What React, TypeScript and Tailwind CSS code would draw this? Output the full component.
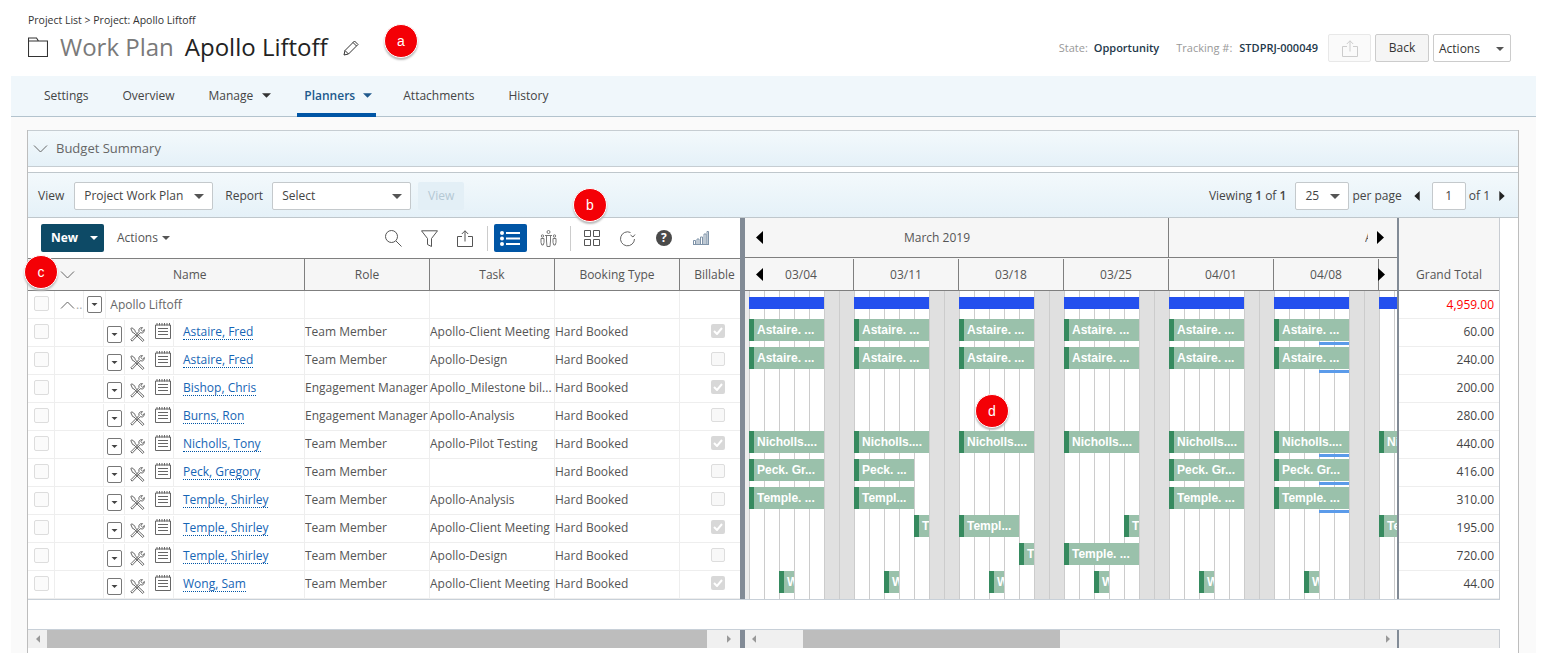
import React from 'react';

const Caret = ({ className = 'w-[10px] h-[5px] fill-[#555]' }: { className?: string }) => (
  <svg viewBox="0 0 10 5" className={className}><polygon points="0,0 10,0 5,5" /></svg>
);

const ArrowL = ({ className = 'w-[7px] h-[13px] fill-black' }: { className?: string }) => (
  <svg viewBox="0 0 7 13" className={className}><polygon points="7,0 7,13 0,6.5" /></svg>
);

const ArrowR = ({ className = 'w-[7px] h-[13px] fill-black' }: { className?: string }) => (
  <svg viewBox="0 0 7 13" className={className}><polygon points="0,0 0,13 7,6.5" /></svg>
);

const Chevron = ({ up = false }: { up?: boolean }) => (
  <svg viewBox="0 0 15 8" className="w-[15px] h-[8px] fill-none stroke-[#666]">
    <path d={up ? 'M1 7.5 7.5 1 14 7.5' : 'M1 .5 7.5 7 14 .5'} />
  </svg>
);

const Dot = ({ label, className }: { label: string; className: string }) => (
  <div className={"absolute flex h-[34px] w-[34px] items-center justify-center rounded-full border border-white bg-[#f40006] font-['Liberation_Sans',sans-serif] text-[14px] text-white shadow-[0_2px_2px_#bbb] " + className}>
    {label}
  </div>
);

const Select = ({ text, className }: { text: string; className: string }) => (
  <div className={'flex h-[28px] items-center justify-between rounded-[2px] border border-[#c4c9cc] bg-white pl-[9px] pr-[8px] text-[12px] text-[#444] ' + className}>
    <span>{text}</span>
    <Caret />
  </div>
);

const ToolIcon = () => (
  <svg viewBox="0 0 15 15" className="h-[15px] w-[15px] fill-none stroke-[#666]" strokeWidth="1">
    <path d="M.8 1.500 2 .8l3 2.500.2 1.500 8.800 8.400-1.300 1.300L4 6 2.600 5.500z" />
    <path d="M.8 12.800 9 4.600a3 3 0 0 1 1.500-3.800 3 3 0 0 1 2-.2L10.800 2.500l1.700 1.700 1.900-1.700a3 3 0 0 1-.4 2.200 3 3 0 0 1-3.800 1L2.200 14.200z" />
  </svg>
);

const NoteIcon = () => (
  <svg viewBox="0 0 16 16" className="h-[16px] w-[16px] fill-none stroke-[#666]">
    <path d="M.5 2h15v13.500H.5z" />
    <path d="M3 5.500h10M3 8.500h10M3 11.500h10" strokeWidth="1.200" />
    <path d="M2 2.500V0M4.500 2.500V0M7 2.500V0M9.500 2.500V0M12 2.500V0M14.500 2.500V0" />
  </svg>
);

const ShareIcon = ({ className }: { className: string }) => (
  <svg viewBox="0 0 16 17" className={className}>
    <path d="M5 6.500H.5v10h15v-10H11M8 11.500V.8M4.800 4 8 .8 11.200 4" />
  </svg>
);

const RowMenu = () => (
  <div className="flex h-[17px] w-[15px] items-center justify-center rounded-[2px] border border-[#777] bg-white">
    <Caret className="h-[3px] w-[7px] fill-[#444]" />
  </div>
);

const Check = ({ checked }: { checked: boolean }) =>
  checked ? (
    <div className="flex h-[14px] w-[14px] items-center justify-center rounded-[2px] bg-[#d8d8d8]">
      <svg viewBox="0 0 10 8" className="h-[8px] w-[10px] fill-none stroke-white" strokeWidth="2"><path d="M1 4l3 3 5-6" /></svg>
    </div>
  ) : (
    <div className="h-[14px] w-[14px] rounded-[2px] border border-[#ddd] bg-[#f8f8f8]" />
  );

const rows = [
  { name: 'Astaire, Fred', role: 'Team Member', task: 'Apollo-Client Meeting', billable: true, total: '60.00' },
  { name: 'Astaire, Fred', role: 'Team Member', task: 'Apollo-Design', billable: false, total: '240.00' },
  { name: 'Bishop, Chris', role: 'Engagement Manager', task: 'Apollo_Milestone bil...', billable: true, total: '200.00' },
  { name: 'Burns, Ron', role: 'Engagement Manager', task: 'Apollo-Analysis', billable: false, total: '280.00' },
  { name: 'Nicholls, Tony', role: 'Team Member', task: 'Apollo-Pilot Testing', billable: true, total: '440.00' },
  { name: 'Peck, Gregory', role: 'Team Member', task: '', billable: false, total: '416.00' },
  { name: 'Temple, Shirley', role: 'Team Member', task: 'Apollo-Analysis', billable: false, total: '310.00' },
  { name: 'Temple, Shirley', role: 'Team Member', task: 'Apollo-Client Meeting', billable: true, total: '195.00' },
  { name: 'Temple, Shirley', role: 'Team Member', task: 'Apollo-Design', billable: false, total: '720.00' },
  { name: 'Wong, Sam', role: 'Team Member', task: 'Apollo-Client Meeting', billable: true, total: '44.00' },
];

// x is measured from the first monday in the chart, w in pixels
type Bar = { x: number; w: number; t: string };

const weekly = (t: string): Bar[] => [0, 105, 210, 315, 420, 525].map((x) => ({ x, w: 75, t }));

const bars: Bar[][] = [
  weekly('Astaire. ...'),
  weekly('Astaire. ...'),
  [],
  [],
  [...weekly('Nicholls....'), { x: 630, w: 18, t: 'Ni' }],
  [
    { x: 0, w: 75, t: 'Peck. Gr...' },
    { x: 105, w: 60, t: 'Peck. ...' },
    { x: 420, w: 75, t: 'Peck. Gr...' },
    { x: 525, w: 75, t: 'Peck. Gr...' },
  ],
  [
    { x: 0, w: 75, t: 'Temple. ...' },
    { x: 105, w: 60, t: 'Templ...' },
    { x: 420, w: 75, t: 'Temple. ...' },
    { x: 525, w: 75, t: 'Temple. ...' },
  ],
  [
    { x: 165, w: 15, t: 'T' },
    { x: 210, w: 60, t: 'Templ...' },
    { x: 375, w: 15, t: 'T' },
    { x: 630, w: 18, t: 'Te' },
  ],
  [
    { x: 270, w: 15, t: 'T' },
    { x: 315, w: 75, t: 'Temple. ...' },
  ],
  [30, 135, 240, 345, 450, 555].map((x) => ({ x, w: 15, t: 'W' })),
];

const underlined = [0, 1, 4, 5, 6];
const weeks = ['03/04', '03/11', '03/18', '03/25', '04/01', '04/08'];
const days = Array.from({ length: 45 }, (_, i) => i);

const td = 'flex shrink-0 items-center border-r border-[#eee] pb-[2px] whitespace-nowrap overflow-hidden';
const th = 'flex shrink-0 items-center justify-center border-r border-[#7f7f7f] pt-[1px] font-medium';

export default function App() {
  return (
    <div className="relative h-[666px] w-[1548px] overflow-hidden bg-white font-['Open_Sans',sans-serif] text-[12px] text-[#555]">
      {/* page header */}
      <div className="flex h-[76px] items-start justify-between pl-[28px] pr-[37px]">
        <div className="pt-[13px]">
          <div className="text-[10.5px] leading-[14px] text-[#333]">Project List &gt; Project: Apollo Liftoff</div>
          <div className="mt-[3px] flex h-[33px] items-center">
            <svg viewBox="0 0 20 20" className="h-[20px] w-[20px] fill-none stroke-[#333]" strokeWidth="1.1">
              <path d="M.5 19.500V1h8l2 3h9v15.500zM.5 4h10" />
            </svg>
            <span className="ml-[12px] text-[24px] text-[#7a7a7a]">Work Plan</span>
            <span className="ml-[11px] text-[24px] text-[#222]">Apollo Liftoff</span>
            <svg viewBox="0 0 16 16" className="ml-[15px] mt-[2px] h-[16px] w-[16px] fill-none stroke-[#333]">
              <path d="M1 15l1-4.500L11.500 1l3.500 3.500L5.500 14zM2 10.500 5.500 14M10 2.500l3.500 3.500" />
            </svg>
          </div>
        </div>
        <div className="flex items-center pt-[34px] text-[11px]">
          <span className="text-[#999]">State:</span>
          <span className="ml-[6px] font-semibold text-[#23384a]">Opportunity</span>
          <span className="ml-[17px] text-[#999]">Tracking #:</span>
          <span className="ml-[7px] font-semibold text-[#23384a]">STDPRJ-000049</span>
          <div className="ml-[10px] flex h-[28px] w-[43px] items-center justify-center rounded-[2px] border border-[#e8e8e8] bg-[#fafafa]">
            <ShareIcon className="h-[17px] w-[16px] fill-none stroke-[#ccc]" />
          </div>
          <div className="ml-[4px] flex h-[28px] w-[54px] items-center justify-center rounded-[2px] border border-[#ccc] bg-[#f5f5f5] text-[12px] text-[#333]">Back</div>
          <div className="ml-[4px] flex h-[28px] w-[78px] items-center justify-between rounded-[2px] border border-[#ccc] bg-white pl-[5px] pr-[6px] pt-[1px] text-[12px] text-[#333]">
            <span>Actions</span>
            <Caret className="h-[4px] w-[8px] fill-[#555]" />
          </div>
        </div>
      </div>

      {/* tabs */}
      <div className="ml-[11px] flex h-[41px] w-[1525px] items-stretch border-b border-[#b3c3cd] bg-[#f0f7fb] pb-[1px] pl-[26px]">
        <div className="flex items-center px-[7px] text-[#444]">Settings</div>
        <div className="ml-[20px] flex items-center px-[7px] text-[#444]">Overview</div>
        <div className="ml-[20px] flex items-center gap-[9px] px-[7px] text-[#444]">Manage <Caret className="h-[5px] w-[9px] fill-[#333]" /></div>
        <div className="ml-[19px] flex h-[41px] w-[79px] items-center gap-[8px] border-b-[4px] border-[#0055a5] pl-[7px] pt-[2px] font-semibold text-[#20598c]">Planners <Caret className="h-[5px] w-[9px] fill-[#20598c]" /></div>
        <div className="ml-[20px] flex items-center px-[7px] text-[#444]">Attachments</div>
        <div className="ml-[20px] flex items-center px-[7px] text-[#444]">History</div>
      </div>

      {/* content area */}
      <div className="ml-[11px] h-[536px] w-[1525px] bg-[#fafafa] pl-[16px] pt-[13px]">
        <div className="h-[523px] w-[1492px] border-x border-[#bdbdbd] bg-white">
          <div className="flex h-[37px] items-center gap-[8px] border-y border-[#c6cdd2] bg-linear-to-b from-[#f3f9fc] to-[#e5f1f8] pl-[5px] text-[13px] text-[#666]">
            <Chevron />
            Budget Summary
          </div>

          {/* view bar */}
          <div className="mt-[5px] flex h-[46px] items-center border-y border-[#bfc7cc] bg-linear-to-b from-[#f3f9fc] to-[#e5f1f8] pl-[10px] pt-[2px] text-[#444]">
            <span>View</span>
            <Select text="Project Work Plan" className="ml-[10px] w-[139px]" />
            <span className="ml-[12px]">Report</span>
            <Select text="Select" className="ml-[9px] w-[139px]" />
            <div className="ml-[7px] flex h-[28px] w-[46px] items-center justify-center rounded-[2px] bg-[#e3eff6] text-[#b4c8d4]">View</div>
            <span className="ml-auto">Viewing <b className="font-semibold">1</b> of <b className="font-semibold">1</b></span>
            <Select text="25" className="ml-[9px] w-[54px]" />
            <span className="ml-[3px]">per page</span>
            <ArrowL className="ml-[12px] h-[10px] w-[6px] fill-[#222]" />
            <div className="ml-[12px] flex h-[28px] w-[34px] items-center justify-center rounded-[2px] border border-[#c4c9cc] bg-white">1</div>
            <span className="ml-[3px]">of 1</span>
            <ArrowR className="ml-[9px] mr-[13px] h-[10px] w-[6px] fill-[#222]" />
          </div>

          <div className="flex h-[382px] w-[1472px] border-b border-[#c8d0d8]">
            {/* left pane */}
            <div className="w-[712px] shrink-0">
              <div className="flex h-[40px] items-center pl-[13px] text-[#555]">
                <div className="flex h-[28px] w-[63px] items-center rounded-[2px] bg-[#0d4a66] pl-[10px] font-bold text-white">
                  New
                  <Caret className="ml-[12px] h-[4px] w-[8px] fill-white" />
                </div>
                <span className="ml-[13px]">Actions</span>
                <Caret className="ml-[4px] h-[4px] w-[8px] fill-[#555]" />
                <svg viewBox="0 0 17 17" className="ml-[215px] h-[17px] w-[17px] fill-none stroke-[#555]">
                  <circle cx="6.5" cy="6.5" r="6" />
                  <path d="M11 11l5.500 5.500" />
                </svg>
                <svg viewBox="0 0 17 17" className="ml-[19px] h-[17px] w-[17px] fill-none stroke-[#555]">
                  <path d="M.5 .8h16L10.500 8.500v8l-4-2V8.500z" />
                </svg>
                <ShareIcon className="ml-[19px] h-[17px] w-[16px] fill-none stroke-[#555]" />
                <div className="ml-[14px] h-[25px] w-px bg-[#ccc]" />
                <div className="ml-[6px] flex h-[28px] w-[33px] items-center justify-center rounded-[2px] bg-[#0055a5]">
                  <svg viewBox="0 0 20 15" className="h-[15px] w-[20px] fill-white">
                    <circle cx="2" cy="2" r="2" /><circle cx="2" cy="7.5" r="2" /><circle cx="2" cy="13" r="2" />
                    <rect x="6" y="1" width="14" height="2" /><rect x="6" y="6.5" width="14" height="2" /><rect x="6" y="12" width="14" height="2" />
                  </svg>
                </div>
                <svg viewBox="0 0 17 17" className="ml-[13px] h-[17px] w-[17px] fill-none stroke-[#777]">
                  <circle cx="8.5" cy="2" r="1.5" /><path d="M5 5.500h7M6.500 5.500V11l.5 5.500h3l.5-5.500V5.500" />
                  <circle cx="2.5" cy="6" r="1.2" /><path d="M1 8.500h3v4l-.8 2.500H1.800L1 12.500z" />
                  <circle cx="14.5" cy="6" r="1.2" /><path d="M13 8.500h3v4l-.8 2.500h-1.400l-.8-2.500z" />
                </svg>
                <div className="ml-[13px] h-[25px] w-px bg-[#ccc]" />
                <svg viewBox="0 0 16 16" className="ml-[13px] h-[16px] w-[16px] fill-none stroke-[#555]">
                  <path d="M.5 .5h6v6h-6zM9.500 .5h6v6h-6zM.5 9.500h6v6h-6zM9.500 9.500h6v6h-6z" />
                </svg>
                <svg viewBox="0 0 17 17" className="ml-[19px] h-[17px] w-[17px] fill-none stroke-[#666]">
                  <path d="M11.500 2.500A7 7 0 1 0 15.500 9" />
                  <path d="M16 4.500l-2 2.500-2.500-2" />
                </svg>
                <div className="ml-[20px] flex h-[16px] w-[16px] items-center justify-center rounded-full bg-[#4a4a4a] text-[12px] font-bold text-white">?</div>
                <svg viewBox="0 0 16 14" className="ml-[21px] h-[14px] w-[16px] fill-none stroke-[#7f93a8]">
                  <path d="M.5 13.500v-4h2v4zM4 13.500V8h2v5.500zM7.500 13.500V6h2v7.500zM11 13.500V3h2v10.500zM14 13.500V.5h1.500v13zM0 13.500h16" />
                </svg>
              </div>
              <div className="flex h-[33px] border-y border-[#7f7f7f] bg-[#f6f6f6] text-[#555]">
                <div className="flex w-[277px] shrink-0 items-center border-r border-[#7f7f7f] pl-[32px]">
                  <Chevron />
                  <span className="ml-[98px] font-medium">Name</span>
                </div>
                <div className={th + ' w-[125px]'}>Role</div>
                <div className={th + ' w-[125px]'}>Task</div>
                <div className={th + ' w-[125px]'}>Booking Type</div>
                <div className="flex flex-1 items-center justify-center pl-[9px] pt-[1px] font-medium">Billable</div>
              </div>
              <div className="flex h-[28px] border-b border-[#eee]">
                <div className="flex w-[27px] shrink-0 items-center justify-center border-r border-[#eee] pb-[3px]">
                  <div className="h-[15px] w-[15px] rounded-[2px] border border-[#ddd] bg-[#fbfbfb]" />
                </div>
                <div className="flex w-[250px] shrink-0 items-center border-r border-[#eee]">
                  <div className="ml-[5px]"><Chevron up /></div>
                  <span className="ml-[1px] text-[#aaa]">..</span>
                  <div className="ml-[1px] flex h-[27px] items-center border-x border-[#eee] pl-[3px] pr-[3px]"><RowMenu /></div>
                  <span className="ml-[4px] text-[#666]">Apollo Liftoff</span>
                </div>
                <div className="w-[125px] shrink-0 border-r border-[#eee]" />
                <div className="w-[125px] shrink-0 border-r border-[#eee]" />
                <div className="w-[125px] shrink-0 border-r border-[#eee]" />
              </div>
              {rows.map((r, i) => (
                <div key={i} className="flex h-[28px] border-b border-[#eee]">
                  <div className="flex w-[27px] shrink-0 items-center justify-center border-r border-[#eee] pb-[3px]">
                    <div className="h-[15px] w-[15px] rounded-[2px] border border-[#ddd] bg-[#fbfbfb]" />
                  </div>
                  <div className="flex w-[250px] shrink-0 items-center border-r border-[#eee]">
                    <div className="ml-[48px] flex h-[26px] items-center border-x border-[#eee] pl-[3px] pr-[2px] pt-[3px]"><RowMenu /></div>
                    <div className="flex h-[26px] w-[23px] items-center justify-center pl-[2px] pt-[3px]"><ToolIcon /></div>
                    <div className="flex h-[26px] w-[26px] items-center justify-center border-x border-[#eee] pb-[3px] pl-[3px]"><NoteIcon /></div>
                    <a className="ml-[9px] mb-[2px] border-b border-dotted border-[#0055a5] leading-[15px] text-[#1665b5]">{r.name}</a>
                  </div>
                  <div className={td + ' w-[125px]'}>{r.role}</div>
                  <div className={td + ' w-[125px]'}>{r.task}</div>
                  <div className={td + ' w-[125px]'}>Hard Booked</div>
                  <div className="flex flex-1 items-center justify-center pb-[3px] pl-[16px]">
                    <Check checked={r.billable} />
                  </div>
                </div>
              ))}
            </div>

            <div className="w-[5px] shrink-0 bg-[#828b96]" />

            {/* gantt pane */}
            <div className="w-[652px] shrink-0">
              <div className="flex h-[40px] border-b border-[#7f7f7f] bg-[#f6f6f6]">
                <div className="flex w-[424px] shrink-0 items-center border-r border-[#7f7f7f] pl-[11px]">
                  <ArrowL />
                  <span className="ml-[141px]">March 2019</span>
                </div>
                <div className="flex flex-1 items-center justify-end pr-[13px]">
                  <span className="w-[3px] overflow-hidden">A</span>
                  <ArrowR className="ml-[9px] h-[13px] w-[7px] fill-black" />
                </div>
              </div>
              <div className="flex h-[33px] border-b border-[#7f7f7f] bg-[#f6f6f6] pt-[1px]">
                <div className="relative w-[4px] shrink-0">
                  <ArrowL className="absolute left-[11px] top-[9px] h-[13px] w-[7px] fill-black" />
                </div>
                {weeks.map((w) => (
                  <div key={w} className="flex w-[105px] shrink-0 items-center justify-center border-r border-[#7f7f7f]">{w}</div>
                ))}
                <div className="flex flex-1 items-center">
                  <ArrowR className="-ml-[1px] h-[13px] w-[7px] fill-black" />
                </div>
              </div>
              <div className="relative h-[308px] overflow-hidden">
                {/* calendar columns behind the bars */}
                <div className="absolute inset-0 flex">
                  <div className="w-[4px] shrink-0 bg-[#ececec]" />
                  {days.map((d) => (
                    <div key={d} className={'w-[15px] shrink-0 border-l border-[#ccc] ' + (d % 7 > 4 ? 'bg-[#e0e0e0]' : '')} />
                  ))}
                </div>
                <div className="relative h-[28px]">
                  {[0, 105, 210, 315, 420, 525, 630].map((x) => (
                    <div key={x} className="absolute top-[6px] h-[12px] bg-[#2450ee]" style={{ left: 4 + x, width: x === 630 ? 18 : 75 }} />
                  ))}
                </div>
                {bars.map((row, i) => (
                  <div key={i} className="relative h-[28px]">
                    {row.map((b) => (
                      <div
                        key={b.x}
                        className="absolute top-0 flex h-[22px] items-center overflow-hidden whitespace-nowrap border-l-[5px] border-[#368a5f] bg-[#9ac1ab] pl-[3px] font-['Liberation_Sans',sans-serif] text-[12px] font-bold text-white"
                        style={{ left: 4 + b.x, width: b.w }}
                      >
                        {b.t}
                      </div>
                    ))}
                    {underlined.includes(i) && <div className="absolute left-[574px] top-[23px] h-[3px] w-[30px] bg-[#5b9bea]" />}
                  </div>
                ))}
              </div>
            </div>

            <div className="w-[2px] shrink-0 bg-[#828b96]" />

            {/* totals */}
            <div className="w-[101px] shrink-0 border-r border-[#c8ccd2]">
              <div className="flex h-[73px] items-end justify-center border-b border-[#7f7f7f] bg-[#f6f6f6] pb-[6px] font-medium">Grand Total</div>
              <div className="flex h-[28px] items-center justify-end border-b border-[#eee] pr-[5px] text-[#f00]">4,959.00</div>
              {rows.map((r, i) => (
                <div key={i} className="flex h-[28px] items-center justify-end border-b border-[#eee] pb-[2px] pr-[5px] text-[#444]">{r.total}</div>
              ))}
            </div>
          </div>

          {/* scrollbars */}
          <div className="mt-[29px] flex h-[19px] w-[1472px] border-t border-[#c8d0d8]">
            <div className="flex w-[712px] shrink-0 items-center bg-[#f0f0f0]">
              <ArrowL className="ml-[8px] h-[8px] w-[4px] fill-[#999]" />
              <div className="ml-[7px] h-full w-[660px] bg-[#bdbdbd]" />
              <ArrowR className="ml-[20px] h-[8px] w-[4px] fill-[#999]" />
            </div>
            <div className="w-[5px] shrink-0 bg-[#828b96]" />
            <div className="flex w-[652px] shrink-0 items-center bg-[#f0f0f0]">
              <ArrowL className="ml-[7px] h-[8px] w-[4px] fill-[#999]" />
              <div className="ml-[47px] h-full w-[257px] bg-[#bdbdbd]" />
              <ArrowR className="ml-[326px] h-[8px] w-[4px] fill-[#999]" />
            </div>
            <div className="w-[2px] shrink-0 bg-[#828b96]" />
            <div className="w-[101px] shrink-0 border-r border-[#c8ccd2] bg-[#f0f0f0]" />
          </div>
        </div>
      </div>

      <Dot label="a" className="left-[384px] top-[24px]" />
      <Dot label="b" className="left-[573px] top-[188px]" />
      <Dot label="c" className="left-[24px] top-[255px]" />
      <Dot label="d" className="left-[975px] top-[394px]" />
    </div>
  );
}
